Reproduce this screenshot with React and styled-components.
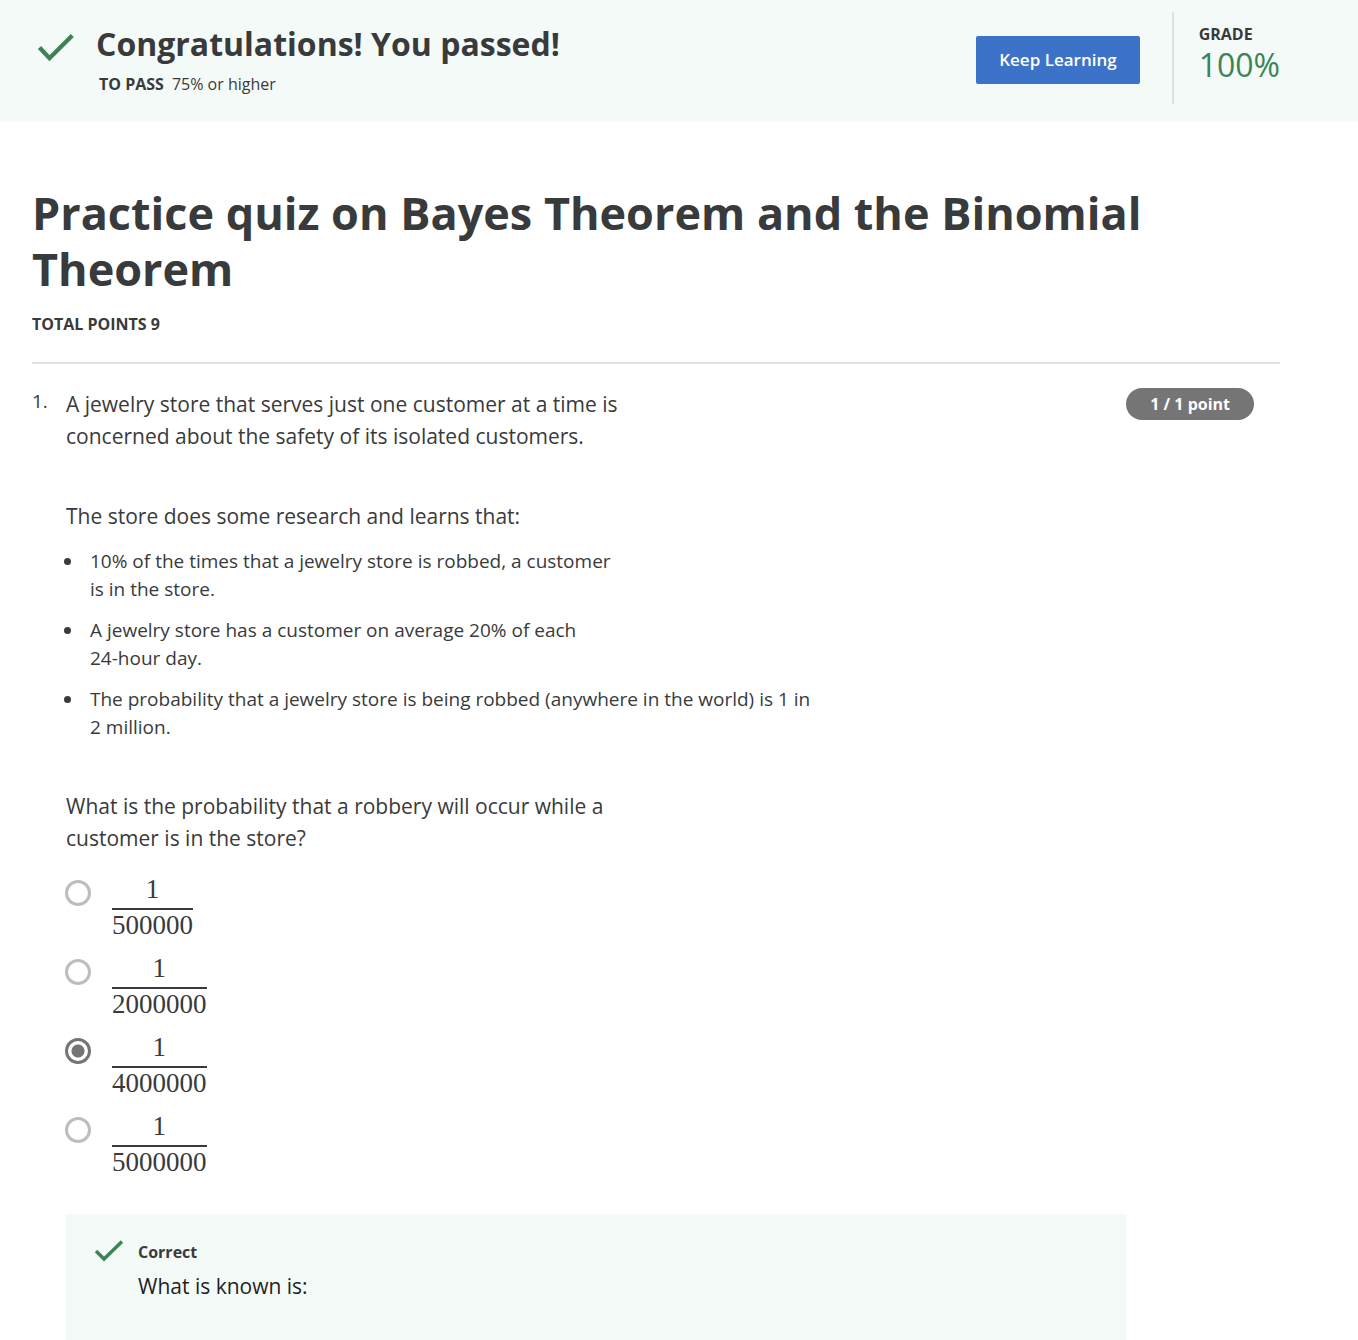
import React, { useState } from "react";
import styled, { createGlobalStyle } from "styled-components";

const GlobalStyle = createGlobalStyle`
  *, *::before, *::after { box-sizing: border-box; }
  body {
    margin: 0;
    background: #fff;
    color: #393a3b;
    font-family: "Open Sans", "Noto Sans", sans-serif;
  }
  h1, h2, h3, p, ul, ol { margin: 0; padding: 0; }
`;

const Banner = styled.header`
  display: flex;
  align-items: flex-start;
  padding: 12px 78px 18px 36px;
  background: #f4faf8;
`;

const CheckIcon = styled.svg`
  flex: none;
  width: ${(p) => p.$size}px;
  height: ${(p) => p.$size}px;
  fill: none;
  stroke: #3c8456;
  stroke-width: ${(p) => p.$stroke};
`;

const BannerCheck = styled.div`
  display: flex;
  width: 60px;
  padding-top: 16px;
`;

const BannerText = styled.div`
  flex: 1;
  padding-top: 8px;
`;

const BannerTitle = styled.h2`
  font-size: 32px;
  line-height: 48px;
  font-weight: 700;
`;

const PassLine = styled.p`
  display: flex;
  gap: 8px;
  padding: 4px 0 0 3px;
  font-size: 16px;
  line-height: 24px;
`;

const PrimaryButton = styled.button`
  height: 48px;
  margin: 24px 32px 0 0;
  padding: 0 23px;
  border: 0;
  border-radius: 2px;
  background: #3c73c8;
  color: #fff;
  font: 600 17px/24px "Open Sans", "Noto Sans", sans-serif;
  cursor: pointer;
`;

const Grade = styled.div`
  min-height: 92px;
  padding: 10px 0 0 25px;
  border-left: 2px solid #e1e1e1;
`;

const GradeLabel = styled.div`
  font-size: 16px;
  line-height: 24px;
  font-weight: 700;
`;

const GradeValue = styled.div`
  color: #3c8456;
  font-size: 32px;
  line-height: 38px;
`;

const Main = styled.main`
  padding: 63px 78px 0 32px;
`;

const Title = styled.h1`
  font-size: 45px;
  line-height: 56px;
  font-weight: 700;
`;

const TotalPoints = styled.div`
  padding: 15px 0 26px;
  border-bottom: 2px solid #e1e1e1;
  font-size: 16px;
  line-height: 24px;
  font-weight: 700;
`;

const Question = styled.section`
  display: grid;
  grid-template-columns: 34px minmax(0, 1fr) auto;
  padding: 24px 26px 0 0;
`;

const Number = styled.div`
  font-size: 19px;
  line-height: 26px;
`;

const Badge = styled.div`
  height: 32px;
  padding: 0 24px;
  border-radius: 16px;
  background: #757575;
  color: #fff;
  font-size: 16px;
  line-height: 32px;
  font-weight: 700;
`;

const Paragraph = styled.p`
  padding-top: ${(p) => (p.$spaced ? 48 : 0)}px;
  font-size: 21px;
  line-height: 32px;
`;

const Facts = styled.ul`
  display: flex;
  flex-direction: column;
  gap: 13px;
  padding: 15px 0 1px 18px;
  font-size: 19px;
  line-height: 28px;
`;

const Fact = styled.li`
  padding-left: 6px;
`;

const Options = styled.fieldset`
  display: flex;
  flex-direction: column;
  gap: 12px;
  margin: 0;
  padding: 19px 0 0;
  border: 0;
`;

const Option = styled.label`
  display: flex;
  align-items: flex-start;
  gap: 20px;
  cursor: pointer;
`;

const Radio = styled.input`
  appearance: none;
  flex: none;
  width: 26px;
  height: 26px;
  margin: 7px 1px 0 -1px;
  border: 3px solid #bdbdbd;
  border-radius: 50%;
  background: #fff;
  cursor: pointer;

  &:checked {
    border-color: #757575;
    background: radial-gradient(circle, #757575 6px, #fff 7px);
  }
`;

const Fraction = styled.span`
  display: flex;
  flex-direction: column;
  align-items: stretch;
  text-align: center;
  font-family: "Liberation Serif", "Times New Roman", serif;
  font-size: 27px;
`;

const Numerator = styled.span`
  padding-bottom: 3px;
  line-height: 32px;
`;

const Denominator = styled.span`
  border-top: 2px solid #393a3b;
  line-height: 30px;
`;

const Feedback = styled.aside`
  display: flex;
  min-height: 160px;
  margin-top: 37px;
  padding: 22px 28px;
  background: #f4faf8;
`;

const FeedbackCheck = styled.div`
  display: flex;
  width: 44px;
`;

const FeedbackTitle = styled.h3`
  padding-top: 4px;
  font-size: 16px;
  line-height: 24px;
  font-weight: 700;
`;

const FeedbackText = styled.p`
  padding-top: 6px;
  color: #1f1f1f;
  font-size: 21px;
  line-height: 32px;
`;

const denominators = ["500000", "2000000", "4000000", "5000000"];

export default function App() {
  const [selected, setSelected] = useState("4000000");

  return (
    <>
      <GlobalStyle />
      <Banner>
        <BannerCheck>
          <CheckIcon $size={40} $stroke={4.4} viewBox="0 0 40 40" aria-hidden="true">
            <path d="M3.5 19.5 L13.5 30.2 L36.3 7.5" />
          </CheckIcon>
        </BannerCheck>
        <BannerText>
          <BannerTitle>Congratulations! You passed!</BannerTitle>
          <PassLine>
            <strong>TO PASS</strong>
            <span>75% or higher</span>
          </PassLine>
        </BannerText>
        <PrimaryButton type="button">Keep Learning</PrimaryButton>
        <Grade>
          <GradeLabel>GRADE</GradeLabel>
          <GradeValue>100%</GradeValue>
        </Grade>
      </Banner>

      <Main>
        <Title>Practice quiz on Bayes Theorem and the Binomial Theorem</Title>
        <TotalPoints>TOTAL POINTS 9</TotalPoints>

        <Question>
          <Number>1.</Number>
          <div>
            <Paragraph>
              A jewelry store that serves just one customer at a time is
              <br />
              concerned about the safety of its isolated customers.
            </Paragraph>
            <Paragraph $spaced>The store does some research and learns that:</Paragraph>
            <Facts>
              <Fact>
                10% of the times that a jewelry store is robbed, a customer
                <br />
                is in the store.
              </Fact>
              <Fact>
                A jewelry store has a customer on average 20% of each
                <br />
                24-hour day.
              </Fact>
              <Fact>
                The probability that a jewelry store is being robbed (anywhere in the world) is 1 in
                <br />2 million.
              </Fact>
            </Facts>
            <Paragraph $spaced>
              What is the probability that a robbery will occur while a
              <br />
              customer is in the store?
            </Paragraph>
            <Options aria-label="Answer">
              {denominators.map((d) => (
                <Option key={d}>
                  <Radio
                    type="radio"
                    name="answer"
                    value={d}
                    checked={selected === d}
                    onChange={() => setSelected(d)}
                  />
                  <Fraction>
                    <Numerator>1</Numerator>
                    <Denominator>{d}</Denominator>
                  </Fraction>
                </Option>
              ))}
            </Options>
            <Feedback>
              <FeedbackCheck>
                <CheckIcon $size={30} $stroke={3.4} viewBox="0 0 30 30" aria-hidden="true">
                  <path d="M2 15 L10 23 L28 5.5" />
                </CheckIcon>
              </FeedbackCheck>
              <div>
                <FeedbackTitle>Correct</FeedbackTitle>
                <FeedbackText>What is known is:</FeedbackText>
              </div>
            </Feedback>
          </div>
          <Badge>1 / 1 point</Badge>
        </Question>
      </Main>
    </>
  );
}
